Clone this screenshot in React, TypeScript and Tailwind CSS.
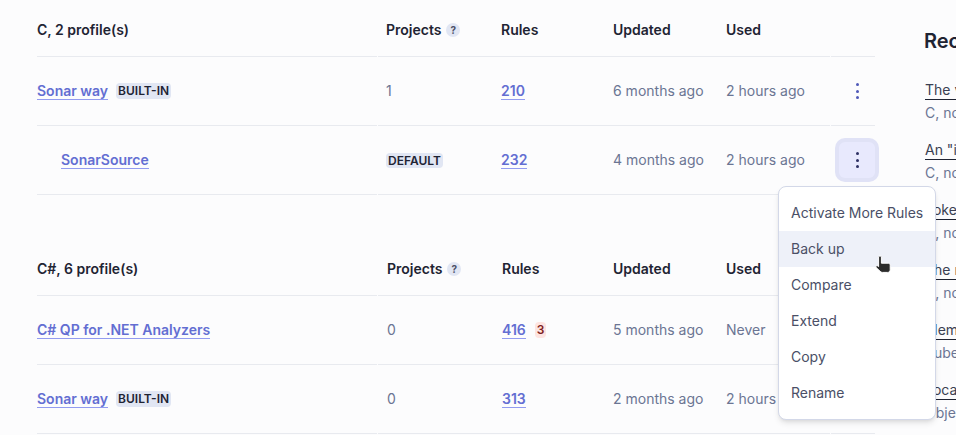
import { useState } from "react";

type Profile = {
  name: string;
  indent?: boolean;
  badge?: string;
  defaultBadge?: boolean;
  projects: string;
  rules: string;
  deprecated?: string;
  updated: string;
  used: string;
  active?: boolean;
};

const cProfiles: Profile[] = [
  { name: "Sonar way", badge: "BUILT-IN", projects: "1", rules: "210", updated: "6 months ago", used: "2 hours ago" },
  { name: "SonarSource", indent: true, defaultBadge: true, projects: "", rules: "232", updated: "4 months ago", used: "2 hours ago", active: true },
];

const csProfiles: Profile[] = [
  { name: "C# QP for .NET Analyzers", projects: "0", rules: "416", deprecated: "3", updated: "5 months ago", used: "Never" },
  { name: "Sonar way", badge: "BUILT-IN", projects: "0", rules: "313", updated: "2 months ago", used: "2 hours ago" },
];

const recentRules = [
  ['The value of "errno" should not be used', "C, not yet activated"],
  ['An "if" statement should be simplified', "C, not yet activated"],
  ["Tokens should not be hard-coded", "C, not yet activated"],
  ["The return value should be checked", "C, not yet activated"],
  ["Memory should be released", "Kubernetes, not yet activated"],
  ["Local variables should be named", "Objective-C, not yet activated"],
];

const menuItems = ["Activate More Rules", "Back up", "Compare", "Extend", "Copy", "Rename"];

function RowLine() {
  return (
    <div className="flex gap-px">
      <div className="h-px w-[340px] bg-[#e8eaef]" />
      <div className="h-px w-[452px] bg-[#e8eaef]" />
      <div className="h-px w-[44px] bg-[#e8eaef]" />
    </div>
  );
}

function Badge({ children }: { children: string }) {
  return (
    <span className="rounded-sm bg-[#e1e6f3] px-[2px] text-xs leading-4 font-semibold text-[#1e2333]">
      {children}
    </span>
  );
}

function Kebab({ active }: { active?: boolean }) {
  const dot = active ? "bg-[#2d3063]" : "bg-[#4f58b8]";
  return (
    <button
      className={
        "ml-[3px] flex h-9 w-9 flex-col items-center justify-center gap-[3.5px] rounded-md " +
        (active ? "bg-[#e8e9fd] ring-4 ring-[#e0e2f6]" : "")
      }
    >
      <span className={"h-[3px] w-[3px] rounded-full " + dot} />
      <span className={"h-[3px] w-[3px] rounded-full " + dot} />
      <span className={"h-[3px] w-[3px] rounded-full " + dot} />
    </button>
  );
}

function ProfileTable({ title, profiles, cols }: { title: string; profiles: Profile[]; cols: string }) {
  return (
    <div>
      <div className={"grid h-14 items-center pt-[4px] text-sm font-semibold text-[#1f2433] " + cols}>
        <span>{title}</span>
        <span className="flex items-center gap-[5px]">
          Projects
          <span className="flex h-[14px] w-[14px] items-center justify-center rounded-full bg-[#e1e6f3] text-[10px] font-bold text-[#4b5068]">
            ?
          </span>
        </span>
        <span>Rules</span>
        <span>Updated</span>
        <span>Used</span>
      </div>
      <RowLine />
      {profiles.map((p) => (
        <div key={p.name}>
          <div className={"grid h-[68px] items-center text-sm text-[#6b7593] " + cols}>
            <div className={"flex items-center gap-2 " + (p.indent ? "pl-6" : "")}>
              <a className="border-b border-[#929bf0] leading-[17px] font-semibold text-[#636ed2]">{p.name}</a>
              {p.badge && <Badge>{p.badge}</Badge>}
            </div>
            <div>{p.defaultBadge ? <Badge>DEFAULT</Badge> : p.projects}</div>
            <div className="flex items-center gap-[9px]">
              <a className="border-b border-[#929bf0] leading-[17px] font-semibold text-[#636ed2]">{p.rules}</a>
              {p.deprecated && (
                <span className="rounded-sm bg-[#fde4e1] px-[2px] text-xs leading-4 font-semibold text-[#7f1d1d]">
                  {p.deprecated}
                </span>
              )}
            </div>
            <div>{p.updated}</div>
            <div>{p.used}</div>
            <Kebab active={p.active} />
          </div>
          <RowLine />
        </div>
      ))}
    </div>
  );
}

export default function App() {
  const [hovered] = useState("Back up");

  return (
    <div className="relative flex h-[435px] w-[956px] overflow-hidden bg-[#fcfcfd] font-['Inter',sans-serif]">
      <div className="ml-[37px] flex w-[838px] shrink-0 flex-col gap-11">
        <ProfileTable title="C, 2 profile(s)" profiles={cProfiles} cols="grid-cols-[349px_115px_112px_113px_110px_39px]" />
        <ProfileTable title="C#, 6 profile(s)" profiles={csProfiles} cols="grid-cols-[350px_115px_111px_113px_110px_39px]" />
      </div>

      <div className="ml-[50px] w-[300px] shrink-0 pt-[28px]">
        <h2 className="-ml-px text-xl leading-[26px] font-semibold whitespace-nowrap text-[#1f2433]">Recently Added Rules</h2>
        <ul className="mt-[26px] flex flex-col">
          {recentRules.map(([rule, sub]) => (
            <li key={rule} className="flex h-[60px] flex-col items-start whitespace-nowrap text-sm">
              <a className="border-b border-[#1f2433] leading-[19px] text-[#3a3f52]">{rule}</a>
              <span className="mt-[4px] leading-[18px] text-[#6b7593]">{sub}</span>
            </li>
          ))}
        </ul>
      </div>

      <div className="absolute top-[186px] left-[778px] w-[158px] rounded-lg border border-[#d3d8e8] bg-white py-2 shadow-md">
        {menuItems.map((item) => (
          <div
            key={item}
            className={
              "flex h-9 items-center px-3 text-sm whitespace-nowrap text-[#4a4f66] " +
              (item === hovered ? "bg-[#eef1f9]" : "")
            }
          >
            {item}
          </div>
        ))}
      </div>

      <svg className="absolute top-[255px] left-[875px]" width="20" height="20" viewBox="0 0 20 20">
        <path
          d="M3.6 1.8c0-1.1 2.8-1.1 2.8 0v6.4h6.9c1.1 0 1.9.9 1.9 2v4.6c0 1.4-1.1 2.6-2.6 2.6H7.4c-1 0-1.7-.4-2.3-1.1L1.2 12.6c-.9-1.1.1-2.3 1.3-1.8l1.1.8z"
          fill="#2b2b2b"
          stroke="#ffffff"
          strokeWidth="1"
        />
      </svg>
    </div>
  );
}
